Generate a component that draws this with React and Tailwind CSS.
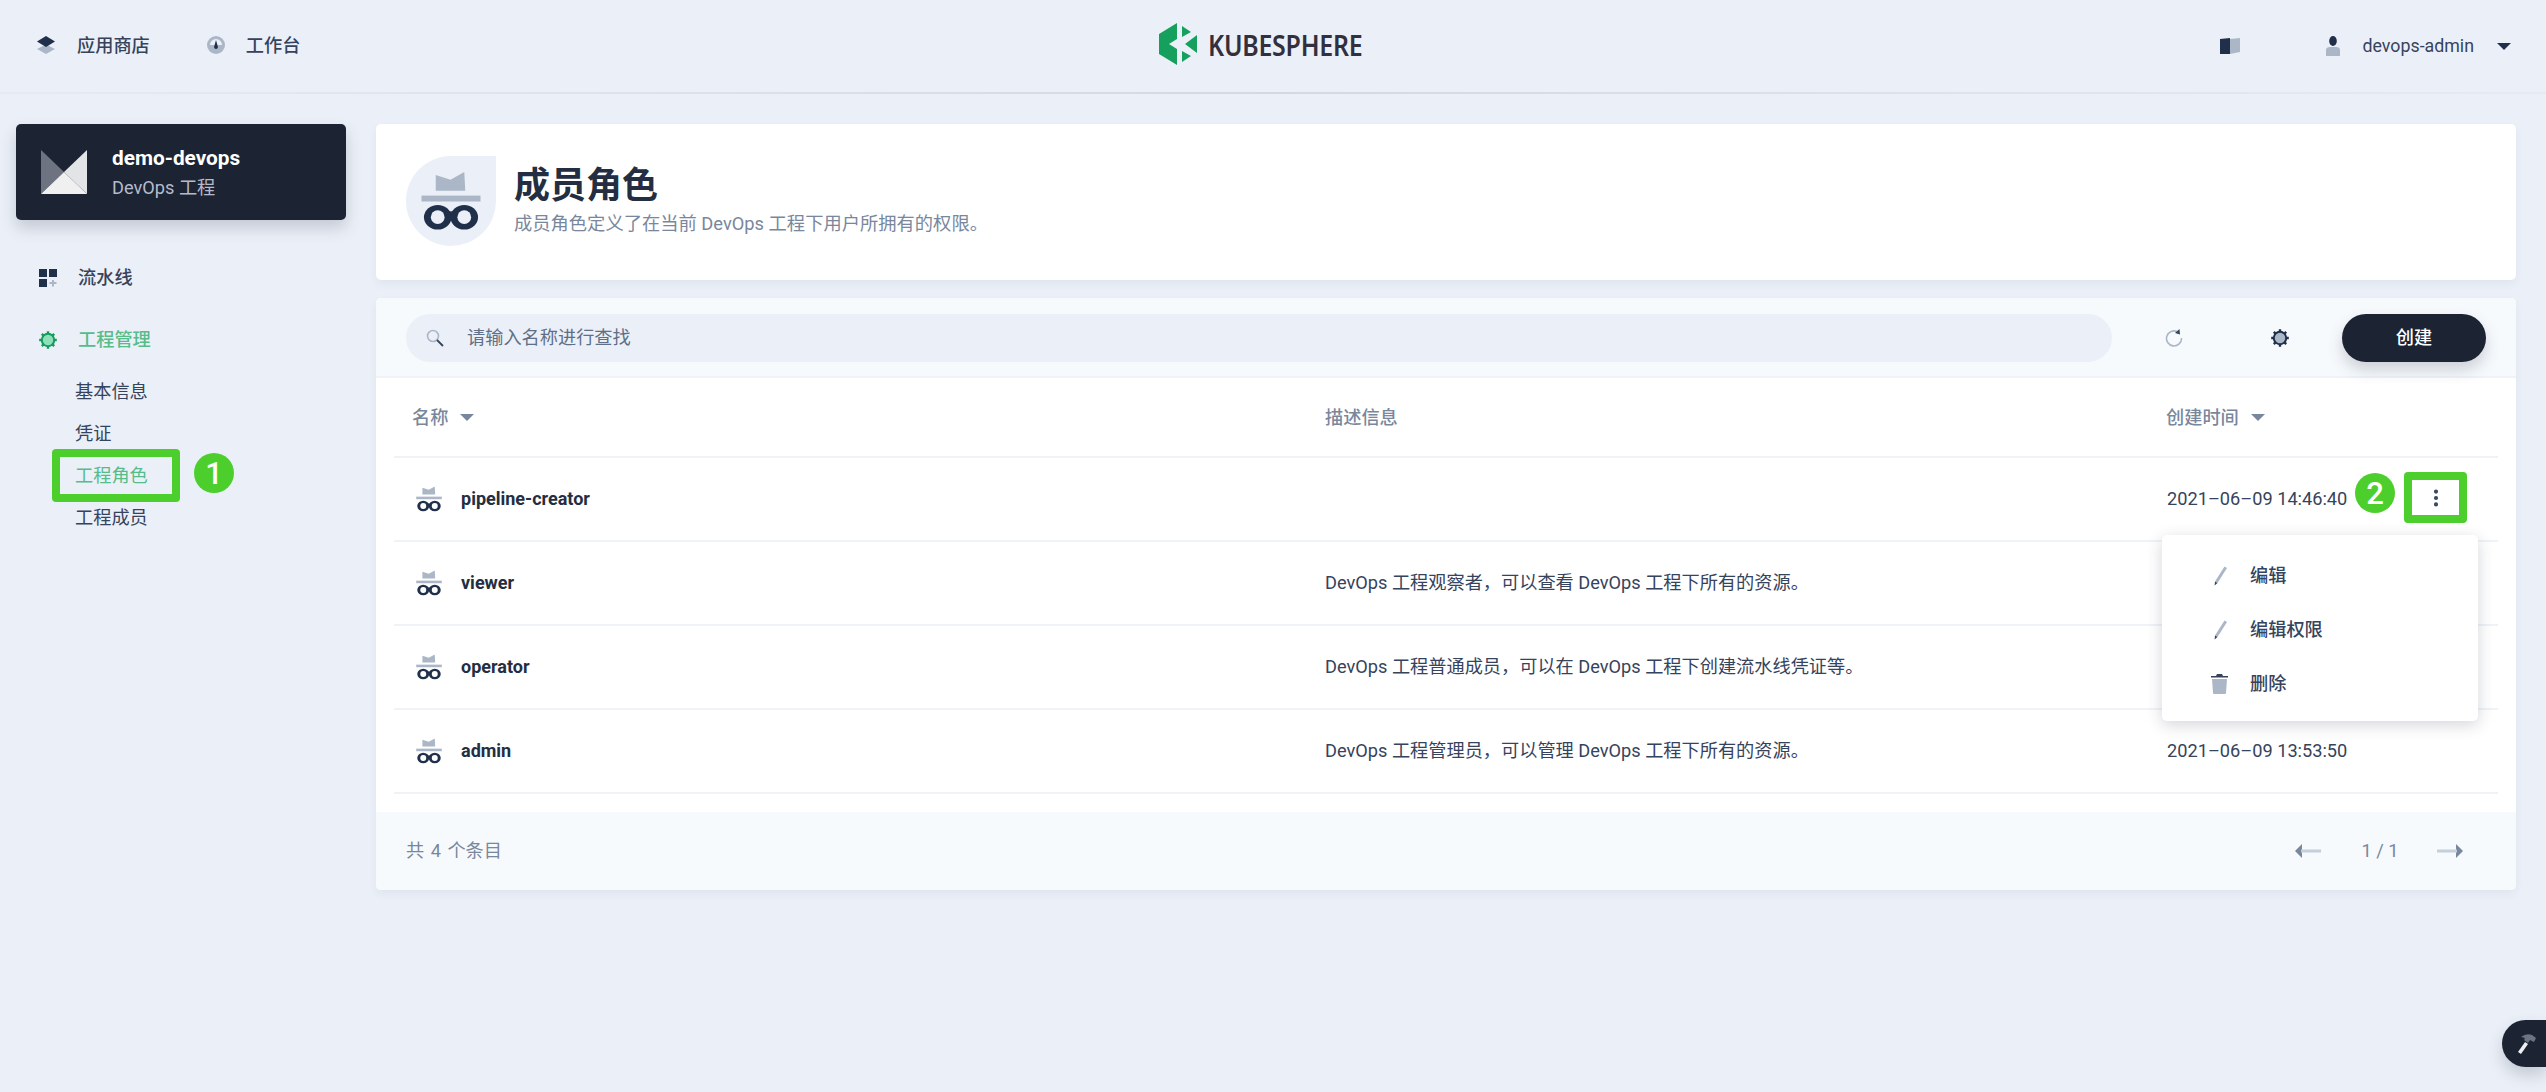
import { MoreVertical } from "lucide-react";

const roles = [
  { name: "pipeline-creator", desc: "", time: "2021-06-09 14:46:40" },
  { name: "viewer", desc: "DevOps 工程观察者，可以查看 DevOps 工程下所有的资源。", time: "" },
  { name: "operator", desc: "DevOps 工程普通成员，可以在 DevOps 工程下创建流水线凭证等。", time: "" },
  { name: "admin", desc: "DevOps 工程管理员，可以管理 DevOps 工程下所有的资源。", time: "2021-06-09 13:53:50" },
];

function HatIcon({ className, hole = "#ffffff" }) {
  return (
    <svg viewBox="15 16 61 61" className={className}>
      <path d="M30 20 L45 25 L59 17 L60 36 L30 36 Z" fill="#abb7c7" />
      <rect x="15.5" y="41" width="60" height="6" fill="#abb7c7" />
      <rect x="40" y="57" width="11" height="5" fill="#20304a" />
      <ellipse cx="32" cy="63" rx="14" ry="12.5" fill="#20304a" />
      <ellipse cx="59" cy="63" rx="14" ry="12.5" fill="#20304a" />
      <circle cx="32" cy="63" r="7" fill={hole} />
      <circle cx="59" cy="63" r="7" fill={hole} />
    </svg>
  );
}

function Caret({ className }) {
  return (
    <svg viewBox="0 0 14 7" className={className}>
      <path d="M0 0 H14 L7 7 Z" fill="currentColor" />
    </svg>
  );
}

function Gear({ className, center = "#abb7c7", color = "#20304a" }) {
  return (
    <svg viewBox="0 0 18 18" className={className}>
      <g stroke={color} strokeWidth="2.4">
        <path d="M9 0.2 V3 M9 15 V17.8 M0.2 9 H3 M15 9 H17.8 M2.8 2.8 L4.8 4.8 M13.2 13.2 L15.2 15.2 M2.8 15.2 L4.8 13.2 M13.2 4.8 L15.2 2.8" />
      </g>
      <circle cx="9" cy="9" r="6.2" fill={center} stroke={color} strokeWidth="2" />
    </svg>
  );
}

function Pencil() {
  return (
    <svg viewBox="0 0 14 20" className="w-[14px] h-[20px]">
      <path d="M10.5 0.5 L13 2 L3.5 17 L1 15.5 Z" fill="#abb7c7" />
      <path d="M1 15.5 L3.5 17 L0.6 19.6 Z" fill="#36435c" />
    </svg>
  );
}

function Badge({ children }) {
  return (
    <div className="w-10 h-10 rounded-full bg-[#4ccf2d] text-white flex items-center justify-center text-[31px] font-medium leading-none">
      {children}
    </div>
  );
}

function Header() {
  return (
    <header className="relative h-[94px] flex flex-col">
      <div className="flex-1 flex items-center justify-between pl-[37px] pr-[35px]">
        <div className="flex items-center text-[18.2px] font-medium text-[#36435c]">
          <svg viewBox="0 0 18 18" className="w-[18px] h-[18px] mr-[22px] -mt-[2px]">
            <path d="M9 8.5 L18 13 L9 18 L0 13 Z" fill="#abb7c7" />
            <path d="M9 0 L18 5.5 L9 11 L0 5.5 Z" fill="#20304a" />
          </svg>
          <span className="mr-[57px]">应用商店</span>
          <svg viewBox="0 0 18 18" className="w-[18px] h-[18px] mr-[21px] -mt-[2px]">
            <circle cx="9" cy="9" r="9" fill="#abb7c7" />
            <path d="M3 9 A6 6 0 0 1 15 9 Z" fill="#ebf0f8" />
            <path d="M9 4 L10.8 10.5 A1.9 1.9 0 1 1 7.2 10.5 Z" fill="#20304a" />
          </svg>
          <span>工作台</span>
        </div>
        <div className="flex items-center text-[17.8px] text-[#36435c]">
          <svg viewBox="0 0 20 16" className="w-5 h-4 mr-[86px]">
            <path d="M0 1 L10 0 V16 H0 Z" fill="#20304a" />
            <path d="M10 1 L20 0 V14 L10 16 Z" fill="#abb7c7" />
          </svg>
          <svg viewBox="0 0 14 20" className="w-[14px] h-5 mr-[23px]">
            <ellipse cx="7" cy="5" rx="3.8" ry="5" fill="#20304a" />
            <path d="M0 14 Q0 11 4 11 H10 Q14 11 14 14 V20 H0 Z" fill="#abb7c7" />
          </svg>
          <span>devops-admin</span>
          <Caret className="w-[14px] h-[7px] ml-[23px] text-[#20304a]" />
        </div>
      </div>
      <div className="h-[2px] bg-linear-to-r from-[#e6ebf3] via-[#d3d8e2] to-[#e6ebf3]" />
      <div className="absolute left-[1159px] top-[23px] flex items-center">
        <svg viewBox="0 0 38 42" className="w-[38px] h-[42px]">
          <path d="M18 0 V16 L10 21 L18 26 V42 L0 31 V11 Z" fill="#16a05d" />
          <path d="M23 3 L32 9 L23 14 Z M38 12 V30 L26 21 Z M23 28 L32 33 L23 39 Z" fill="#16a05d" />
        </svg>
        <span className="ml-[11px] text-[29px] leading-none text-[#322f3e] font-semibold font-['Noto_Sans'] tracking-[-0.3px] scale-x-[0.86] origin-left">
          KUBESPHERE
        </span>
      </div>
    </header>
  );
}

function Sidebar() {
  return (
    <aside className="w-[330px] ml-4 mr-[30px] shrink-0">
      <div className="h-24 rounded-[5px] bg-[#1c2333] flex items-center pl-[25px] shadow-[0_8px_16px_0_rgba(36,46,66,0.2)]">
        <svg viewBox="0 0 46 44" className="w-[46px] h-[44px] mr-[25px]">
          <path d="M0 0 L23 22 L0 44 Z" fill="#6d7380" />
          <path d="M46 0 V44 L23 22 Z" fill="#e3e4e6" />
          <path d="M0 44 L23 22 L46 44 Z" fill="#f0f0f1" />
        </svg>
        <div>
          <div className="text-white font-bold text-[20.8px] leading-[28px]">demo-devops</div>
          <div className="text-[#b4bccb] text-[18.2px] leading-[26px] mt-[3px]">DevOps 工程</div>
        </div>
      </div>
      <nav className="mt-[39px] text-[18.2px]">
        <div className="h-[38px] flex items-center pl-[23px] text-[#36435c] font-medium">
          <svg viewBox="0 0 18 18" className="w-[18px] h-[18px] mr-[21px]">
            <path d="M0 0 H8 V8 H0 Z M10 0 H18 V8 H10 Z M0 10 H8 V18 H0 Z" fill="#20304a" />
            <path d="M13 11 H15 V13 H17.5 V15 H15 V17.5 H13 V15 H10.5 V13 H13 Z" fill="#abb7c7" />
          </svg>
          流水线
        </div>
        <div className="h-[38px] flex items-center pl-[23px] mt-6 text-[#55bc8a] font-medium">
          <Gear className="w-[18px] h-[18px] mr-[21px]" center="#8ee0bb" color="#159b5e" />
          工程管理
        </div>
        <div className="mt-3 pl-[59px] text-[#36435c]">
          <div className="h-[42px] flex items-center">基本信息</div>
          <div className="h-[42px] flex items-center">凭证</div>
          <div className="relative h-[42px] flex items-center text-[#55bc8a]">
            工程角色
            <div className="absolute left-[-23px] top-[-6px] w-[128px] h-[53px] border-[8px] border-[#4ccf2d] rounded-[4px]" />
            <div className="absolute left-[119px] top-[-2px]">
              <Badge>1</Badge>
            </div>
          </div>
          <div className="h-[42px] flex items-center">工程成员</div>
        </div>
      </nav>
    </aside>
  );
}

function RoleRow({ role, first }) {
  return (
    <div className="h-[84px] relative flex items-center border-b-2 border-[#eff3f8] text-[18.2px]">
      <div className="w-[931px] shrink-0 flex items-center pl-[22px] font-bold text-[#242e42] text-[18px]">
        <HatIcon className="w-[26px] h-[26px] mr-[19px]" />
        <span className="-mt-[1px]">{role.name}</span>
      </div>
      <div className="w-[841px] shrink-0 text-[#36435c]">{role.desc}</div>
      <div className="text-[#36435c] pl-[1px]">{role.time.replace(/-/g, "–")}</div>
      {first && (
        <>
          <div className="absolute left-[1961px] top-[15px]">
            <Badge>2</Badge>
          </div>
          <div className="absolute left-[2010px] top-[14px] w-[63px] h-[51px] border-[8px] border-[#4ccf2d] rounded-[4px] flex items-center justify-center">
            <MoreVertical className="w-[22px] h-[22px] text-[#36435c]" strokeWidth={2.5} />
          </div>
        </>
      )}
    </div>
  );
}

function RoleTable() {
  return (
    <div className="relative mt-[18px] rounded-[5px] bg-white shadow-[0_4px_8px_0_rgba(36,46,66,0.06)]">
      <div className="h-20 bg-[#f7fafd] rounded-t-[5px] border-b-2 border-[#eff3f8] flex items-start pt-4 pl-[30px] pr-[30px]">
        <div className="w-[1706px] h-12 rounded-full bg-[#ebf0f8] flex items-center pl-5 text-[18.2px] text-[#5f6f87]">
          <svg viewBox="0 0 18 18" className="w-[18px] h-[18px] mr-[23px]">
            <circle cx="7" cy="7" r="5.5" fill="none" stroke="#abb7c7" strokeWidth="1.6" />
            <path d="M11 11 L17 17" stroke="#36435c" strokeWidth="1.8" />
          </svg>
          请输入名称进行查找
        </div>
        <svg viewBox="0 0 18 18" className="w-[18px] h-[18px] ml-[53px] mt-[15px]">
          <path d="M12.5 2.8 A7.5 7.5 0 1 0 16.5 9" fill="none" stroke="#abb7c7" strokeWidth="1.6" />
          <path d="M14.5 0 L15 5.5 L10 4 Z" fill="#36435c" />
        </svg>
        <Gear className="w-[18px] h-[18px] ml-[88px] mt-[15px]" />
        <button className="ml-[53px] w-36 h-12 rounded-full bg-[#1c2333] text-white text-[18.2px] font-medium shadow-[0_8px_16px_0_rgba(36,46,66,0.2)]">
          创建
        </button>
      </div>
      <div className="mx-[18px]">
        <div className="h-20 flex items-center pt-[2px] border-b-2 border-[#eff3f8] text-[18.2px] text-[#79879c] font-medium">
          <div className="w-[931px] shrink-0 flex items-center pl-[18px]">
            名称
            <Caret className="w-[14px] h-[7px] ml-3" />
          </div>
          <div className="w-[841px] shrink-0">描述信息</div>
          <div className="flex items-center">
            创建时间
            <Caret className="w-[14px] h-[7px] ml-3" />
          </div>
        </div>
        {roles.map((role, i) => (
          <RoleRow key={role.name} role={role} first={i === 0} />
        ))}
      </div>
      <div className="mt-[18px] h-[78px] bg-[#f7fafd] rounded-b-[5px] flex items-center justify-between pl-[30px] pr-[53px] text-[18.2px] text-[#79879c]">
        <span className="[word-spacing:2px]">共 4 个条目</span>
        <div className="flex items-center">
          <svg viewBox="0 0 26 14" className="w-[26px] h-[14px]">
            <path d="M7 0 V14 L0 7 Z" fill="#79879c" />
            <path d="M6 7 H26" stroke="#c5cfdb" strokeWidth="3" />
          </svg>
          <span className="ml-[40px] mr-[38px] w-[38px] whitespace-pre text-center">1 / 1</span>
          <svg viewBox="0 0 26 14" className="w-[26px] h-[14px]">
            <path d="M19 0 V14 L26 7 Z" fill="#79879c" />
            <path d="M0 7 H20" stroke="#c5cfdb" strokeWidth="3" />
          </svg>
        </div>
      </div>
      <div className="absolute left-[1786px] top-[237px] w-[316px] h-[186px] rounded-[5px] bg-white shadow-[0_4px_16px_0_rgba(36,46,66,0.2)] pt-[14px] text-[18.2px] text-[#36435c] font-medium">
        <div className="h-[54px] flex items-center pl-[52px]">
          <span className="w-9"><Pencil /></span>编辑
        </div>
        <div className="h-[54px] flex items-center pl-[52px]">
          <span className="w-9"><Pencil /></span>编辑权限
        </div>
        <div className="h-[54px] flex items-center pl-[49px]">
          <svg viewBox="0 0 17 20" className="w-[17px] h-5 mr-[22px]">
            <path d="M0 2 H5 L6 0 H11 L12 2 H17 V3.5 H0 Z" fill="#36435c" />
            <path d="M1 5 H16 L15 19 Q15 20 14 20 H3 Q2 20 2 19 Z" fill="#abb7c7" />
          </svg>
          删除
        </div>
      </div>
    </div>
  );
}

export default function App() {
  return (
    <div className="relative h-[1092px] overflow-hidden bg-[#ebf0f8] font-['Roboto','Noto_Sans_CJK_SC',sans-serif]">
      <Header />
      <div className="flex pt-[30px]">
        <Sidebar />
        <main className="w-[2140px] shrink-0">
          <div className="h-[156px] rounded-[5px] bg-white flex items-center pl-[30px] shadow-[0_4px_8px_0_rgba(36,46,66,0.06)]">
            <div className="w-[90px] h-[90px] rounded-full rounded-tr-none bg-[#ebf0f8] flex items-center justify-center mr-[18px] -mt-[2px]">
              <HatIcon className="w-[60px] h-[60px]" hole="#ebf0f8" />
            </div>
            <div className="mt-[6px]">
              <h1 className="text-[36px] leading-[46px] font-bold text-[#242e42] -mt-[10px] mb-[2px]">成员角色</h1>
              <p className="text-[18.3px] leading-[26px] text-[#79879c] mt-[2px]">
                成员角色定义了在当前 DevOps 工程下用户所拥有的权限。
              </p>
            </div>
          </div>
          <RoleTable />
        </main>
      </div>
      <div className="absolute right-0 top-[1020px] w-11 h-[47px] rounded-l-[24px] bg-[#1c2333] flex items-center pl-4 shadow-[0_8px_16px_0_rgba(36,46,66,0.2)]">
        <svg viewBox="0 0 18 20" className="w-[18px] h-5">
          <path d="M7 8 L10 10 L3 20 L0 18 Z" fill="#eef0f2" />
          <path d="M3 3 Q8 -1 14 1 L18 4 L16 8 L12 6 L10 9 L6 6 L7 4 Z" fill="#6d7380" />
        </svg>
      </div>
    </div>
  );
}
